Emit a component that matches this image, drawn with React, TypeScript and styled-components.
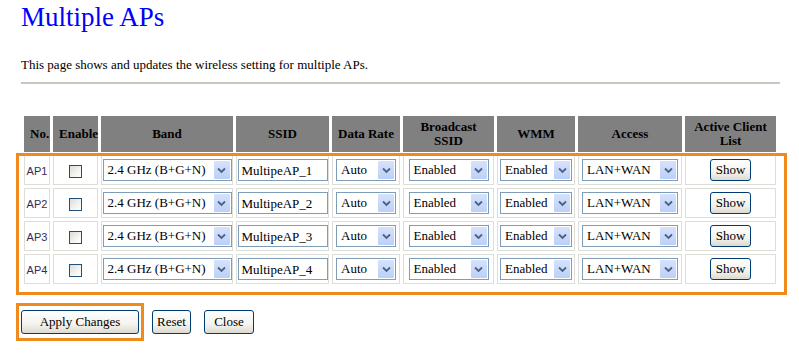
import React from 'react';
import styled, { createGlobalStyle } from 'styled-components';

const serif = `'Liberation Serif', 'Times New Roman', serif`;

const GlobalStyle = createGlobalStyle`
  body {
    margin: 0;
    background: #ffffff;
    font-family: ${serif};
    color: #000000;
  }
`;

const Page = styled.div`
  padding: 2px 0 0 21px;
  width: 778px;
  box-sizing: border-box;
  font-family: ${serif};
`;

const Title = styled.h2`
  margin: 0;
  font-family: ${serif};
  font-size: 27px;
  font-weight: normal;
  line-height: 30px;
  color: #0000ff;
`;

const Description = styled.p`
  margin: 25px 0 0 0;
  font-size: 13px;
  line-height: 15px;
`;

const Rule = styled.div`
  margin-top: 10px;
  width: 759px;
  height: 2px;
  background: #c8c8c0;
`;

const TableWrap = styled.div`
  position: relative;
  margin-top: 29px;
  width: 758px;
`;

const Grid = styled.table`
  border-collapse: separate;
  border-spacing: 3px;
  table-layout: fixed;
  width: 758px;
`;

const HeadCell = styled.th<{ width: number }>`
  width: ${({ width }) => width}px;
  height: 36px;
  padding: 0 6px;
  box-sizing: border-box;
  background: #808080;
  font-family: ${serif};
  font-size: 13px;
  font-weight: bold;
  line-height: 14px;
  text-align: center;
  color: #000000;
`;

const Cell = styled.td`
  height: 30px;
  padding: 0;
  box-sizing: border-box;
  border: 1px solid #deded8;
  text-align: center;
  vertical-align: middle;
`;

const ApLabel = styled.span`
  font-family: 'Liberation Sans', Arial, sans-serif;
  font-size: 11px;
  color: #3a2a55;
`;

const CheckBox = styled.span`
  display: inline-block;
  width: 11px;
  height: 11px;
  border: 1px solid #1c5180;
  background: linear-gradient(135deg, #dcdcd7 0%, #f4f4f0 60%, #ffffff 100%);
  vertical-align: middle;
`;

const SelectBox = styled.span<{ width: number }>`
  display: inline-flex;
  align-items: center;
  width: ${({ width }) => width}px;
  height: 22px;
  box-sizing: border-box;
  border: 1px solid #7f9db9;
  background: #ffffff;
  vertical-align: middle;
  padding: 1px;
`;

const SelectText = styled.span`
  flex: 1;
  text-align: left;
  padding-left: 3px;
  font-family: ${serif};
  font-size: 13px;
  white-space: nowrap;
  overflow: hidden;
`;

const ArrowBtn = styled.span`
  display: flex;
  align-items: center;
  justify-content: center;
  width: 16px;
  height: 18px;
  background: linear-gradient(180deg, #d5e2fc 0%, #bcd0f7 100%);
  border-radius: 1px;
`;

const TextBox = styled.span`
  display: inline-block;
  width: 90px;
  height: 22px;
  box-sizing: border-box;
  border: 1px solid #7f9db9;
  padding: 3px 0 0 3px;
  text-align: left;
  font-family: ${serif};
  font-size: 13px;
  line-height: 15px;
  vertical-align: middle;
`;

const XpButton = styled.button<{ width: number; tall?: boolean; gap?: number }>`
  width: ${({ width }) => width}px;
  height: ${({ tall }) => (tall ? 24 : 22)}px;
  margin-left: ${({ gap }) => gap || 0}px;
  padding: 0;
  border: 1px solid #003c74;
  border-radius: 3px;
  background: linear-gradient(180deg, #ffffff 0%, #f4f3ee 60%, #dcdad0 100%);
  font-family: ${serif};
  font-size: 13px;
  color: #000000;
  vertical-align: middle;
`;

const Highlight = styled.div`
  position: absolute;
  left: -5px;
  top: 40px;
  width: 771px;
  height: 142px;
  box-sizing: border-box;
  border: 3px solid #f08a1c;
  pointer-events: none;
`;

const Actions = styled.div`
  display: flex;
  align-items: center;
  margin: 16px 0 0 -5px;
`;

const Framed = styled.span`
  display: inline-flex;
  padding: 4px 2px;
  border: 3px solid #f08a1c;
`;

const Chevron = () => (
  <svg width="9" height="7" viewBox="0 0 9 7">
    <path d="M1 1.5 L4.5 5 L8 1.5" fill="none" stroke="#4d6185" strokeWidth="1.8" />
  </svg>
);

const Select = ({ value, width }: { value: string; width: number }) => (
  <SelectBox width={width}>
    <SelectText>{value}</SelectText>
    <ArrowBtn>
      <Chevron />
    </ArrowBtn>
  </SelectBox>
);

const columns: [string, number][] = [
  ['No.', 26],
  ['Enable', 45],
  ['Band', 132],
  ['SSID', 93],
  ['Data Rate', 68],
  ['Broadcast SSID', 91],
  ['WMM', 78],
  ['Access', 104],
  ['Active Client List', 91],
];

const aps = [1, 2, 3, 4];

const App = () => (
  <>
    <GlobalStyle />
    <Page>
      <Title>Multiple APs</Title>
      <Description>
        This page shows and updates the wireless setting for multiple APs.
      </Description>
      <Rule />
      <TableWrap>
        <Grid>
          <thead>
            <tr>
              {columns.map(([label, width]) => (
                <HeadCell key={label} width={width}>
                  {label}
                </HeadCell>
              ))}
            </tr>
          </thead>
          <tbody>
            {aps.map((n) => (
              <tr key={n}>
                <Cell>
                  <ApLabel>AP{n}</ApLabel>
                </Cell>
                <Cell>
                  <CheckBox />
                </Cell>
                <Cell>
                  <Select value="2.4 GHz (B+G+N)" width={129} />
                </Cell>
                <Cell>
                  <TextBox>MultipeAP_{n}</TextBox>
                </Cell>
                <Cell>
                  <Select value="Auto" width={60} />
                </Cell>
                <Cell>
                  <Select value="Enabled" width={80} />
                </Cell>
                <Cell>
                  <Select value="Enabled" width={72} />
                </Cell>
                <Cell>
                  <Select value="LAN+WAN" width={96} />
                </Cell>
                <Cell>
                  <XpButton width={41}>Show</XpButton>
                </Cell>
              </tr>
            ))}
          </tbody>
        </Grid>
        <Highlight />
      </TableWrap>
      <Actions>
        <Framed>
          <XpButton width={118} tall>
            Apply Changes
          </XpButton>
        </Framed>
        <XpButton width={39} tall gap={8}>
          Reset
        </XpButton>
        <XpButton width={50} tall gap={13}>
          Close
        </XpButton>
      </Actions>
    </Page>
  </>
);

export default App;
